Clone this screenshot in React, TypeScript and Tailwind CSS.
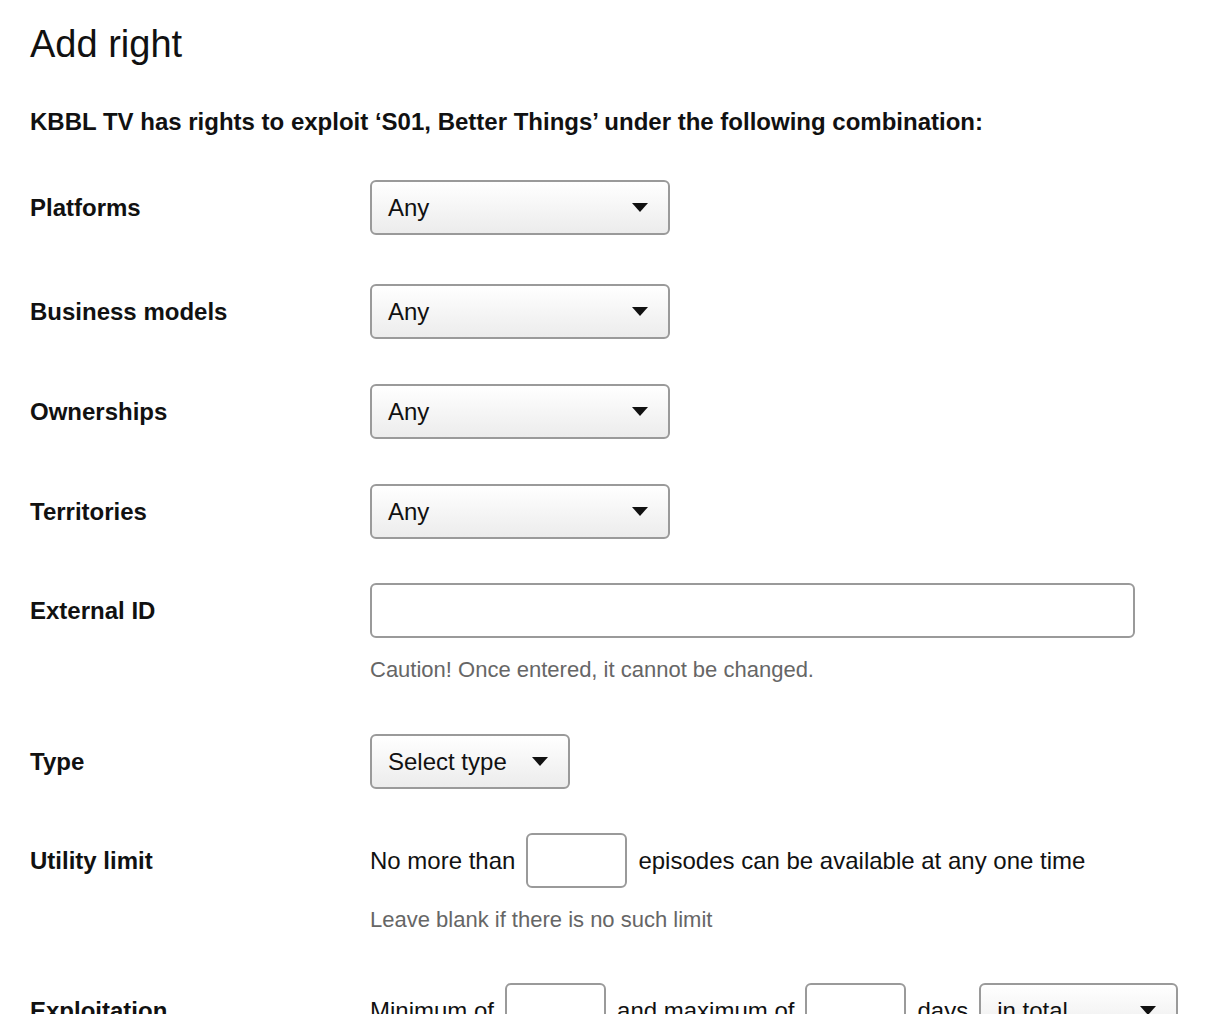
import React from "react";

const font = { fontFamily: '"Liberation Sans", Arial, Helvetica, sans-serif' };

function Caret() {
  return (
    <svg width="16" height="9" viewBox="0 0 16 9" className="shrink-0">
      <path d="M0 0h16L8 9z" fill="#111" />
    </svg>
  );
}

function Select({ value, width }: { value: string; width: string }) {
  return (
    <div
      className={`${width} h-[55px] flex items-center justify-between pl-[16px] pr-[20px] border-2 border-[#9a9a9a] rounded-[6px] bg-gradient-to-b from-white to-[#ececec] text-[24px] text-[#111]`}
    >
      <span>{value}</span>
      <Caret />
    </div>
  );
}

function Box({ width }: { width: string }) {
  return <div className={`${width} h-[55px] border-2 border-[#9a9a9a] rounded-[6px] bg-white shrink-0`} />;
}

function Row({ label, top, children }: { label: string; top: string; children: React.ReactNode }) {
  return (
    <div className={`grid grid-cols-[340px_1fr] ${top}`}>
      <div className="h-[55px] flex items-center text-[24px] font-bold text-[#111]">{label}</div>
      <div>{children}</div>
    </div>
  );
}

function Hint({ children }: { children: React.ReactNode }) {
  return <p className="mt-[18px] text-[22px] leading-[28px] text-[#666]">{children}</p>;
}

export default function App() {
  return (
    <div className="min-h-[1014px] bg-white px-[30px] pt-[22px] overflow-hidden" style={font}>
      <h1 className="text-[38px] leading-[44px] text-[#111]">Add right</h1>
      <p className="mt-[41px] text-[24px] leading-[30px] font-bold text-[#111]">
        KBBL TV has rights to exploit ‘S01, Better Things’ under the following combination:
      </p>

      <Row label="Platforms" top="mt-[43px]">
        <Select value="Any" width="w-[300px]" />
      </Row>
      <Row label="Business models" top="mt-[49px]">
        <Select value="Any" width="w-[300px]" />
      </Row>
      <Row label="Ownerships" top="mt-[45px]">
        <Select value="Any" width="w-[300px]" />
      </Row>
      <Row label="Territories" top="mt-[45px]">
        <Select value="Any" width="w-[300px]" />
      </Row>
      <Row label="External ID" top="mt-[44px]">
        <Box width="w-[765px]" />
        <Hint>Caution! Once entered, it cannot be changed.</Hint>
      </Row>
      <Row label="Type" top="mt-[50px]">
        <Select value="Select type" width="w-[200px]" />
      </Row>
      <Row label="Utility limit" top="mt-[44px]">
        <div className="flex items-center gap-[11px] text-[24px] text-[#111]">
          <span>No more than</span>
          <Box width="w-[101px]" />
          <span>episodes can be available at any one time</span>
        </div>
        <Hint>Leave blank if there is no such limit</Hint>
      </Row>
      <Row label="Exploitation" top="mt-[49px]">
        <div className="flex items-center gap-[11px] text-[24px] text-[#111] whitespace-nowrap">
          <span>Minimum of</span>
          <Box width="w-[101px]" />
          <span>and maximum of</span>
          <Box width="w-[101px]" />
          <span>days</span>
          <div className="w-[199px] h-[55px] shrink-0 flex items-center justify-between pl-[16px] pr-[20px] border-2 border-[#9a9a9a] rounded-[6px] bg-gradient-to-b from-white to-[#ececec]">
            <span>in total</span>
            <Caret />
          </div>
        </div>
      </Row>
    </div>
  );
}
